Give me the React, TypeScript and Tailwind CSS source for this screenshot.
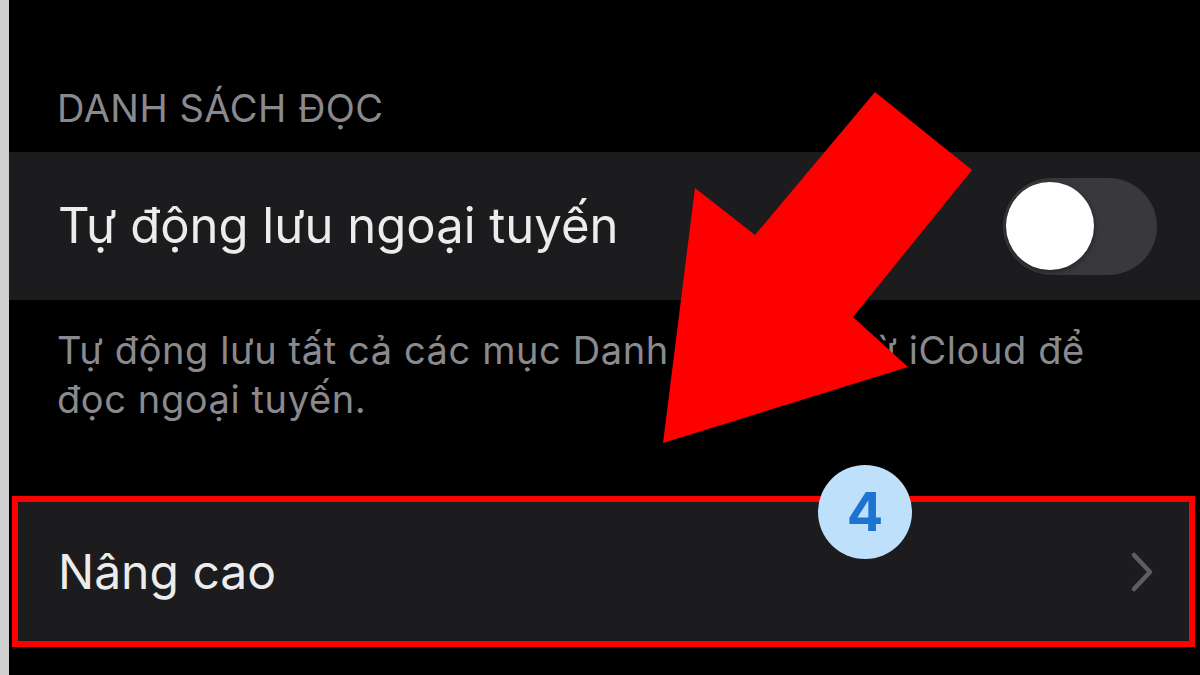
export default function App() {
  return (
    <div
      className="relative w-[1200px] h-[675px] overflow-hidden bg-black flex"
      style={{ fontFamily: 'Inter, "Noto Sans", sans-serif' }}
    >
      {/* left edge strip */}
      <div className="w-[9px] shrink-0 bg-[#cfcfcf]" />

      <div className="flex-1 flex flex-col pt-[85px]">
        <div className="pl-[48px] text-[38px] leading-[46px] text-[#8a8a8e] tracking-[0.5px]">
          DANH SÁCH ĐỌC
        </div>

        <div className="mt-[21px] h-[148px] bg-[#1c1c1e] flex items-center justify-between pl-[49px] pr-[43px]">
          <span className="text-[49px] text-[#ececec]">Tự động lưu ngoại tuyến</span>
          <div className="w-[154px] h-[97px] rounded-full bg-[#39393d] flex items-center px-[3px]">
            <div className="w-[88px] h-[88px] rounded-full bg-white shadow-[0_2px_6px_rgba(0,0,0,0.4)]" />
          </div>
        </div>

        <p className="pt-[26px] pl-[48px] pr-[20px] text-[38px] leading-[49px] text-[#8a8a8e] tracking-[0.6px]">
          Tự động lưu tất cả các mục Danh sách đọc từ iCloud để
          <br />
          đọc ngoại tuyến.
        </p>

        <div className="mt-[72px] ml-[3px] mr-[5px] h-[151px] border-[6px] border-[#ff0000] bg-[#1c1c1e] flex items-center justify-between pl-[40px] pr-[34px]">
          <span className="text-[48px] text-[#ececec]">Nâng cao</span>
          <svg width="26" height="42" viewBox="0 0 26 42" fill="none">
            <path d="M5 4 L21 21 L5 38" stroke="#5e5e62" strokeWidth="4.5" strokeLinecap="round" strokeLinejoin="round" />
          </svg>
        </div>
      </div>

      {/* red annotation arrow */}
      <svg className="absolute inset-0 pointer-events-none" width="1200" height="675" viewBox="0 0 1200 675">
        <polygon
          points="875,92 972,170 853,317 908,367 663,443 695,188 755,235"
          fill="#ff0000"
        />
      </svg>

      {/* step badge */}
      <div className="absolute left-[818px] top-[465px] w-[94px] h-[94px] rounded-full bg-[#bfe0fa] flex items-center justify-center">
        <span className="text-[54px] font-bold text-[#1e73d0] leading-none">4</span>
      </div>
    </div>
  );
}
